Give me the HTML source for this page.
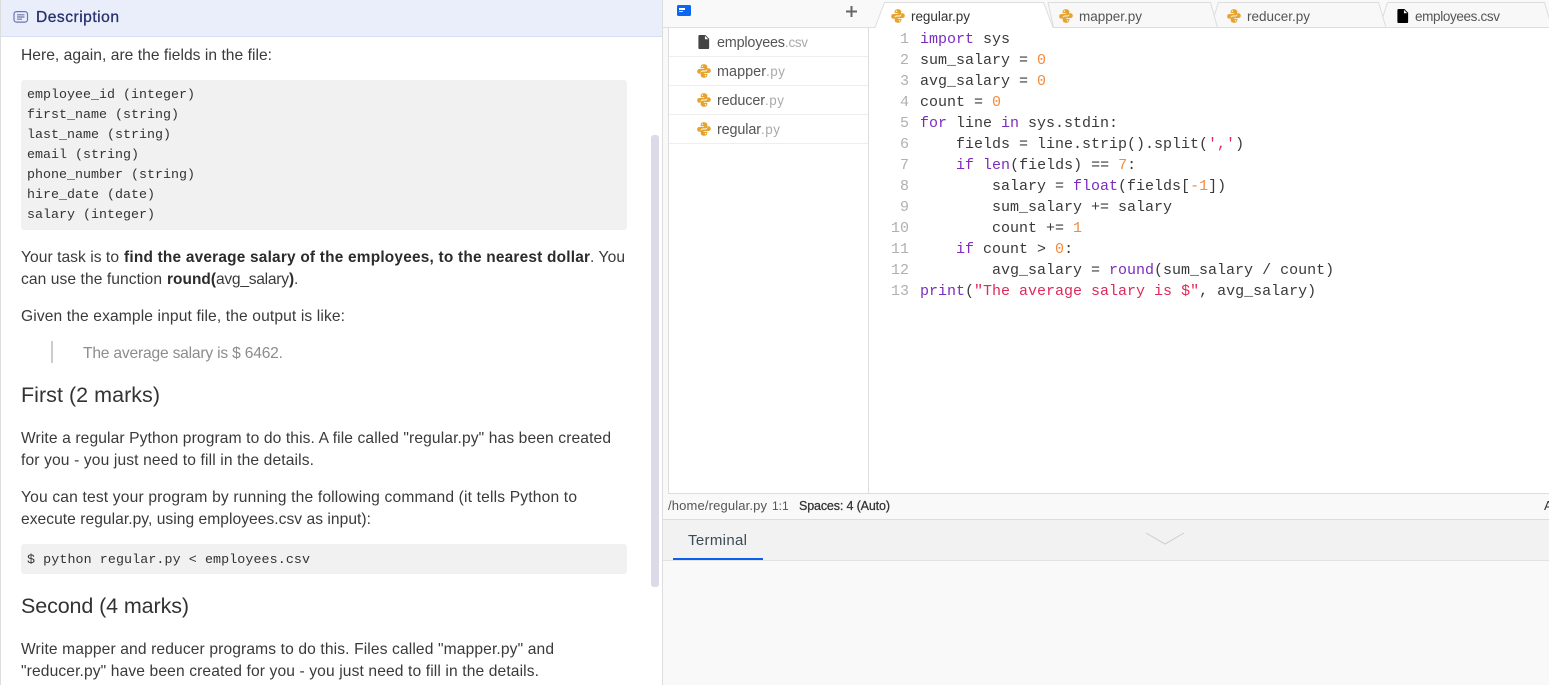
<!DOCTYPE html>
<html lang="en"><head><meta charset="utf-8"><title>Description</title>
<style>
html,body{margin:0;padding:0;background:#fff;width:1549px;height:685px;overflow:hidden}
svg{display:block}
text{white-space:pre}
.p{font:15.6px "Liberation Sans",sans-serif;fill:#3a3a3a}
.b{font:bold 15.4px "Liberation Sans",sans-serif;fill:#2b2b2b}
.h{font:21.5px "Liberation Sans",sans-serif;fill:#333}
.m{font:13.33px "Liberation Mono",monospace;fill:#333}
.c{font:15px "Liberation Mono",monospace;fill:#3a3a3a}
.n{font:15px "Liberation Mono",monospace;fill:#b0b0b0;text-anchor:end}
.k{fill:#7b2cbf}.o{fill:#f58a3c}.s{fill:#e0285a}
.t{font:13.5px "Liberation Sans",sans-serif;fill:#444}
.f{font:14.4px "Liberation Sans",sans-serif;fill:#555}
.x{font:13.4px "Liberation Sans",sans-serif;fill:#aaa}
.st{font:13px "Liberation Sans",sans-serif;fill:#555}
</style></head><body>
<svg width="1549" height="685" viewBox="0 0 1549 685" xmlns="http://www.w3.org/2000/svg">
<defs>
<symbol id="py" viewBox="0 0 14 14">
<path id="pyh" fill="#e5a32d" d="M7 .3C4.500.3 3.700 1.400 3.700 2.800V4.200H7.200V5H2.500C1 5 .2 6 .2 7.200C.2 8.600 1 9.800 2.500 9.800H3.700V8.300C3.700 7.200 4.600 6.500 5.700 6.500H8.300C9.400 6.500 10.300 5.700 10.300 4.700V2.800C10.300 1.400 9.200.3 7 .3Z"/>
<path fill="#e5a32d" transform="rotate(180 7 7)" d="M7 .3C4.500.3 3.700 1.400 3.700 2.800V4.200H7.200V5H2.500C1 5 .2 6 .2 7.200C.2 8.600 1 9.800 2.500 9.800H3.700V8.300C3.700 7.200 4.600 6.500 5.700 6.500H8.300C9.400 6.500 10.300 5.700 10.300 4.700V2.800C10.300 1.400 9.200.3 7 .3Z"/>
<circle cx="5.400" cy="2.300" r=".7" fill="#fff"/><circle cx="8.600" cy="11.700" r=".7" fill="#fff"/>
</symbol>
<symbol id="file" viewBox="0 0 12 15">
<path d="M1.300 0H7.500L11.500 4V13.600Q11.500 15 10.200 15H1.300Q0 15 0 13.600V1.400Q0 0 1.300 0ZM7 1V4.600H10.600Z" fill-rule="evenodd"/>
</symbol>
</defs>

<!-- left panel -->
<rect x="0" y="0" width="663" height="685" fill="#fff"/>
<rect x="0" y="0" width="1" height="685" fill="#ddd"/>
<rect x="662" y="0" width="1" height="685" fill="#ddd"/>
<rect x="1" y="0" width="661" height="36" fill="#e9eefa"/>
<rect x="1" y="36" width="661" height="1" fill="#d5dff5"/>
<g fill="none" stroke="#6b76ab" stroke-width="1.200">
<rect x="14" y="11.600" width="13.500" height="10.500" rx="2.500"/>
<path d="M17 14.800h7.500M17 17h7.500M17 19.200h5"/>
</g>
<text x="36" y="22" class="p" style="fill:#27306f;stroke:#27306f;stroke-width:.3" textLength="83">Description</text>

<text x="21" y="60" class="p" textLength="251">Here, again, are the fields in the file:</text>

<rect x="21" y="80" width="606" height="150" rx="3" fill="#f1f1f1"/>
<text x="27" y="98" class="m">employee_id (integer)</text>
<text x="27" y="118" class="m">first_name (string)</text>
<text x="27" y="138" class="m">last_name (string)</text>
<text x="27" y="158" class="m">email (string)</text>
<text x="27" y="178" class="m">phone_number (string)</text>
<text x="27" y="198" class="m">hire_date (date)</text>
<text x="27" y="218" class="m">salary (integer)</text>

<text x="21" y="262" class="p" textLength="98">Your task is to</text>
<text x="124" y="262" class="b" textLength="466">find the average salary of the employees, to the nearest dollar</text>
<text x="590" y="262" class="p" textLength="35">. You</text>
<text x="21" y="284" class="p" textLength="141">can use the function</text>
<text x="167" y="284" class="b" textLength="49">round(</text>
<text x="216" y="284" class="p" textLength="73">avg_salary</text>
<text x="289" y="284" class="b">)</text>
<text x="294" y="284" class="p">.</text>

<text x="21" y="321" class="p" textLength="324">Given the example input file, the output is like:</text>
<rect x="51" y="341" width="2" height="22" fill="#ccc"/>
<text x="83" y="358" class="p" style="fill:#8c8c8c" textLength="200">The average salary is $ 6462.</text>

<text x="21" y="402" class="h" textLength="139">First (2 marks)</text>

<text x="21" y="443" class="p" textLength="590">Write a regular Python program to do this. A file called "regular.py" has been created</text>
<text x="21" y="465" class="p" textLength="293">for you - you just need to fill in the details.</text>
<text x="21" y="502" class="p" textLength="556">You can test your program by running the following command (it tells Python to</text>
<text x="21" y="524" class="p" textLength="350">execute regular.py, using employees.csv as input):</text>

<rect x="21" y="544" width="606" height="30" rx="3" fill="#f1f1f1"/>
<text x="27" y="563" class="m" textLength="283">$ python regular.py &lt; employees.csv</text>

<text x="21" y="613" class="h" textLength="168">Second (4 marks)</text>
<text x="21" y="654" class="p" textLength="533">Write mapper and reducer programs to do this. Files called "mapper.py" and</text>
<text x="21" y="676" class="p" textLength="518">"reducer.py" have been created for you - you just need to fill in the details.</text>

<rect x="651" y="135" width="8" height="452" rx="3" fill="#dcd9e8"/>

<!-- right panel -->
<rect x="663" y="0" width="886" height="685" fill="#f9f9f9"/>
<rect x="869" y="28" width="680" height="465" fill="#fff"/>
<rect x="668" y="28" width="201" height="465" fill="#fff"/>
<rect x="663" y="27" width="886" height="1" fill="#e0e0e0"/>
<rect x="668" y="27" width="1" height="467" fill="#ddd"/>
<rect x="868" y="27" width="1" height="467" fill="#ddd"/>
<rect x="668" y="493" width="881" height="1" fill="#ddd"/>
<rect x="669" y="56" width="199" height="1" fill="#eee"/>
<rect x="669" y="85" width="199" height="1" fill="#eee"/>
<rect x="669" y="114" width="199" height="1" fill="#eee"/>
<rect x="669" y="143" width="199" height="1" fill="#eee"/>

<!-- toolbar -->
<rect x="677" y="5" width="14" height="11" rx="1.500" fill="#0b66f2"/>
<rect x="679" y="8" width="6" height="2" fill="#fff"/>
<rect x="679" y="11" width="4" height="1" fill="#cfe0ff"/>
<path d="M851.500 6v11M846 11.500h11" stroke="#666" stroke-width="2" fill="none"/>

<!-- tabs -->
<g stroke="#ddd" stroke-width="1" fill="#f8f8f8">
<path d="M1379.500 27.500L1387.500 2.500H1544.500L1552 27.500Z"/>
<path d="M1210.500 27.500L1218.500 2.500H1378.500L1386 27.500Z"/>
<path d="M1053.500 27.500L1048 2.500H1210.500L1217.500 27.500Z"/>
</g>
<path d="M875 28L884.500 2.500H1043.500L1053 28Z" fill="#fff"/>
<path d="M875 27.500L884.500 2.500H1043.500L1053 27.500" fill="none" stroke="#ddd"/>
<use href="#py" x="891" y="9" width="14" height="14"/>
<text x="911" y="21" class="t" style="fill:#333" textLength="59">regular.py</text>
<use href="#py" x="1059" y="9" width="14" height="14"/>
<text x="1079" y="21" class="t" style="fill:#555" textLength="63">mapper.py</text>
<use href="#py" x="1227" y="9" width="14" height="14"/>
<text x="1247" y="21" class="t" style="fill:#555" textLength="63">reducer.py</text>
<use href="#file" x="1397" y="9" width="12" height="14" fill="#000"/>
<text x="1415" y="21" class="t" style="fill:#555" textLength="85">employees.csv</text>

<!-- file list -->
<use href="#file" x="698" y="35" width="12" height="14" fill="#444"/>
<text x="717" y="47" class="f" textLength="68">employees</text><text x="785" y="47" class="x" textLength="23">.csv</text>
<use href="#py" x="697" y="64" width="14" height="14"/>
<text x="717" y="76" class="f" textLength="49">mapper</text><text x="766" y="76" class="x" textLength="19">.py</text>
<use href="#py" x="697" y="93" width="14" height="14"/>
<text x="717" y="105" class="f" textLength="48">reducer</text><text x="765" y="105" class="x" textLength="19">.py</text>
<use href="#py" x="697" y="122" width="14" height="14"/>
<text x="717" y="134" class="f" textLength="44">regular</text><text x="761" y="134" class="x" textLength="19">.py</text>

<!-- code -->
<text x="909" y="43" class="n">1</text>
<text x="909" y="64" class="n">2</text>
<text x="909" y="85" class="n">3</text>
<text x="909" y="106" class="n">4</text>
<text x="909" y="127" class="n">5</text>
<text x="909" y="148" class="n">6</text>
<text x="909" y="169" class="n">7</text>
<text x="909" y="190" class="n">8</text>
<text x="909" y="211" class="n">9</text>
<text x="909" y="232" class="n">10</text>
<text x="909" y="253" class="n">11</text>
<text x="909" y="274" class="n">12</text>
<text x="909" y="295" class="n">13</text>
<text x="920" y="43" class="c"><tspan class="k">import</tspan> sys</text>
<text x="920" y="64" class="c">sum_salary = <tspan class="o">0</tspan></text>
<text x="920" y="85" class="c">avg_salary = <tspan class="o">0</tspan></text>
<text x="920" y="106" class="c">count = <tspan class="o">0</tspan></text>
<text x="920" y="127" class="c"><tspan class="k">for</tspan> line <tspan class="k">in</tspan> sys.stdin:</text>
<text x="920" y="148" class="c">    fields = line.strip().split(<tspan class="s">','</tspan>)</text>
<text x="920" y="169" class="c">    <tspan class="k">if</tspan> <tspan class="k">len</tspan>(fields) == <tspan class="o">7</tspan>:</text>
<text x="920" y="190" class="c">        salary = <tspan class="k">float</tspan>(fields[<tspan class="o">-1</tspan>])</text>
<text x="920" y="211" class="c">        sum_salary += salary</text>
<text x="920" y="232" class="c">        count += <tspan class="o">1</tspan></text>
<text x="920" y="253" class="c">    <tspan class="k">if</tspan> count &gt; <tspan class="o">0</tspan>:</text>
<text x="920" y="274" class="c">        avg_salary = <tspan class="k">round</tspan>(sum_salary / count)</text>
<text x="920" y="295" class="c"><tspan class="k">print</tspan>(<tspan class="s">"The average salary is $"</tspan>, avg_salary)</text>

<!-- status -->
<text x="668" y="510" class="st" textLength="99">/home/regular.py</text>
<text x="772" y="510" class="st" style="font-size:12px">1:1</text>
<text x="799" y="510" class="st" style="fill:#333;stroke:#333;stroke-width:.25;font-size:12.500px" textLength="91">Spaces: 4 (Auto)</text>
<text x="1544" y="510" class="st" style="fill:#333">A</text>

<!-- terminal -->
<rect x="663" y="519" width="886" height="1" fill="#ddd"/>
<rect x="663" y="520" width="886" height="40" fill="#f2f2f2"/>
<rect x="663" y="560" width="886" height="1" fill="#e2e2e2"/>
<text x="688" y="545" class="f" style="fill:#3c4a57;font-size:15px" textLength="59">Terminal</text>
<rect x="673" y="558" width="90" height="2" fill="#0b5fef"/>
<path d="M1146 533L1165 544L1184 533" fill="none" stroke="#ccc" stroke-width="1"/>
</svg>
</body></html>
